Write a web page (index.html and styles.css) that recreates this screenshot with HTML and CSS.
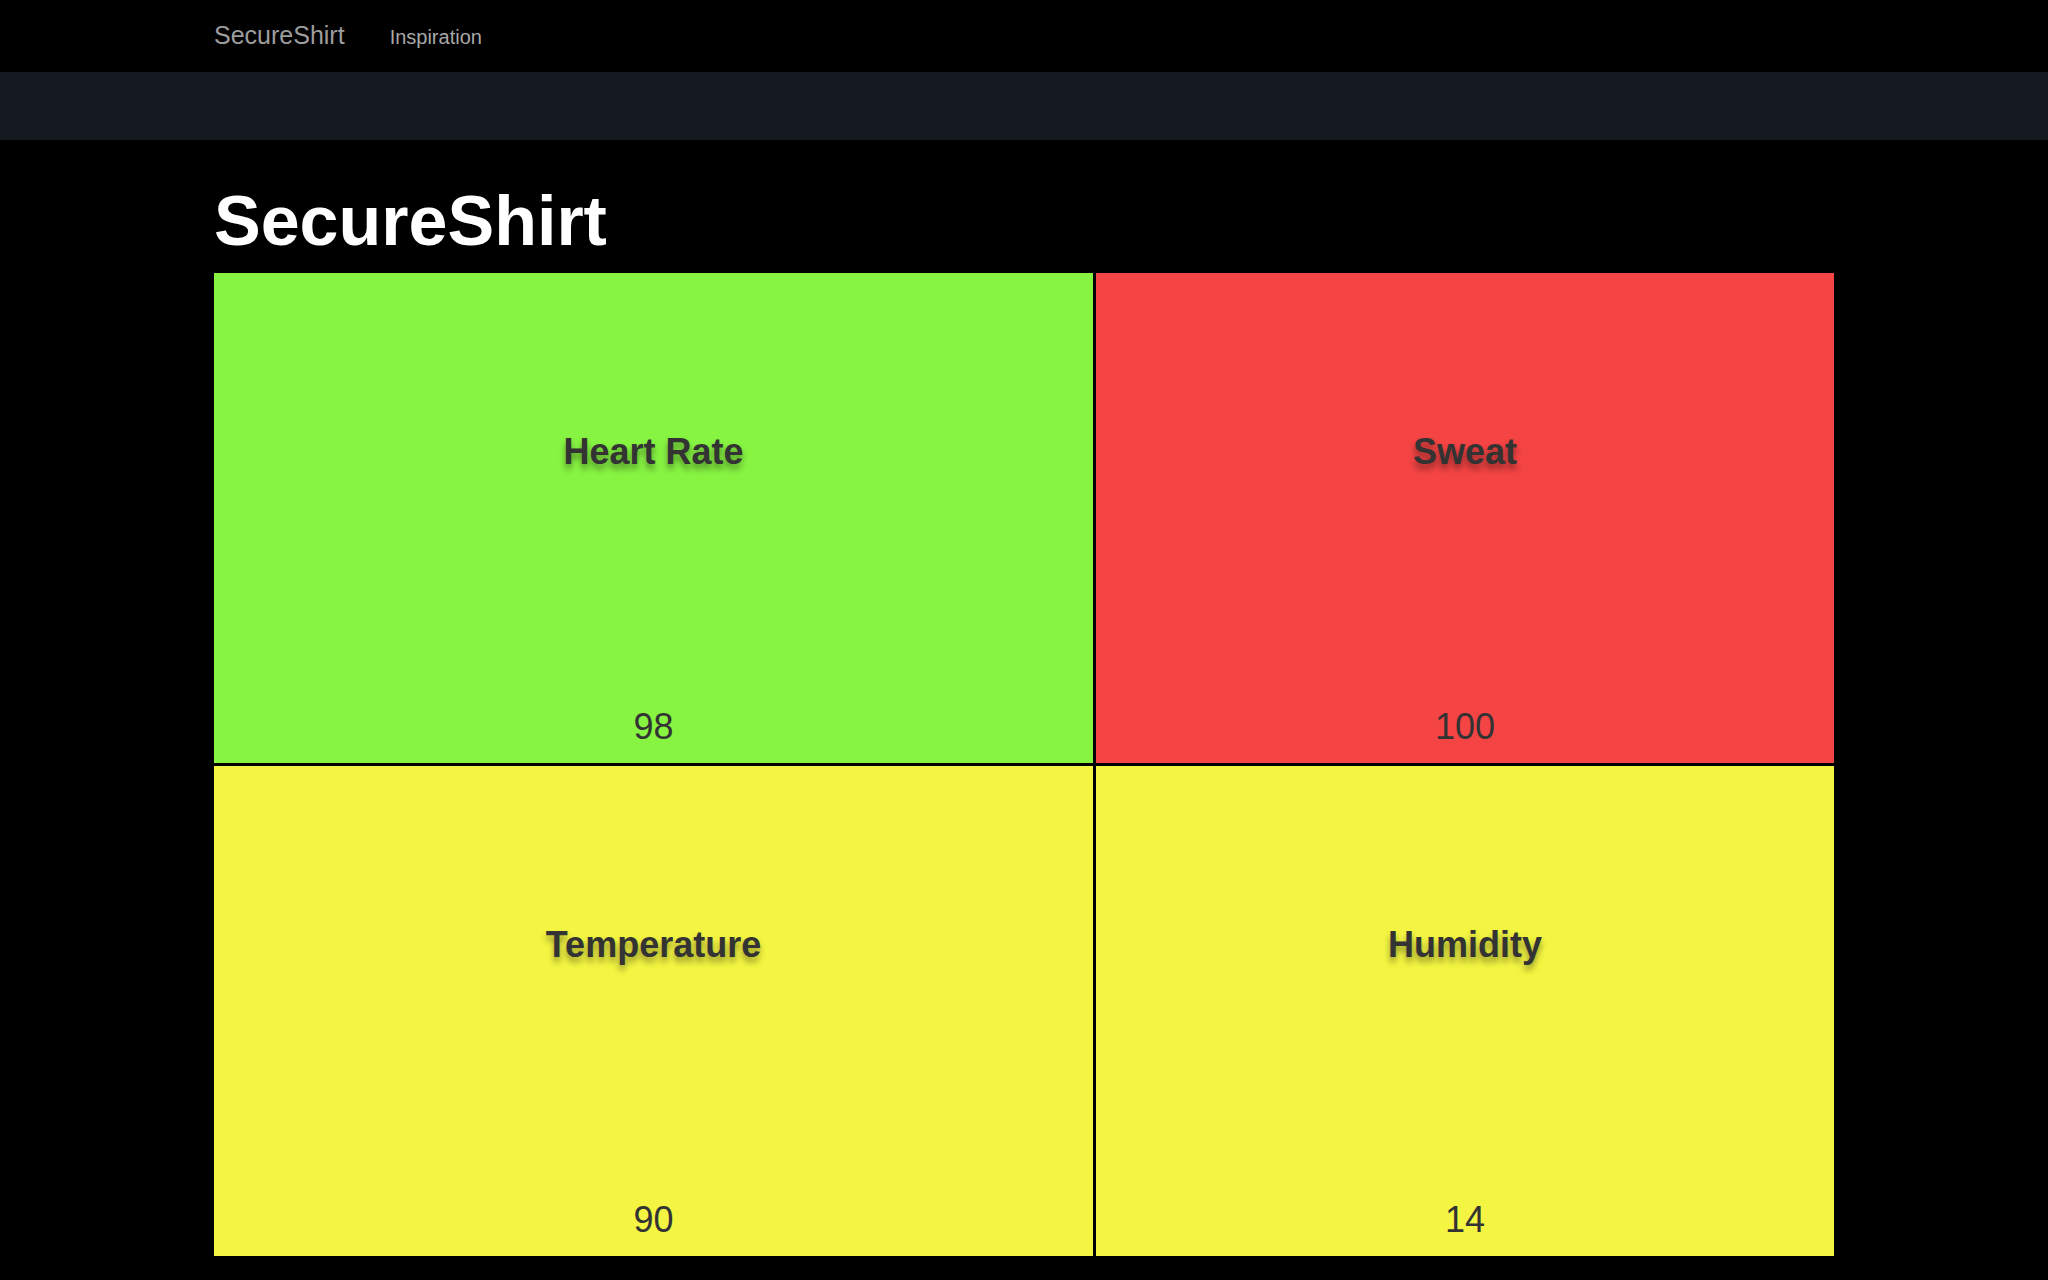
FILE: index.html
```html
<!DOCTYPE html>
<html lang="en">
<head>
<meta charset="utf-8">
<title>SecureShirt</title>
<link rel="stylesheet" href="styles.css">
</head>
<body>
<nav class="navbar">
  <div class="container nav-inner">
    <a class="brand" href="#">SecureShirt</a>
    <a class="nav-link" href="#">Inspiration</a>
  </div>
</nav>
<div class="band"></div>
<main class="container">
  <h1 class="title">SecureShirt</h1>
  <div class="grid">
    <div class="tile tile-green">
      <div class="tile-label">Heart Rate</div>
      <div class="tile-value">98</div>
    </div>
    <div class="tile tile-red">
      <div class="tile-label">Sweat</div>
      <div class="tile-value">100</div>
    </div>
    <div class="tile tile-yellow">
      <div class="tile-label">Temperature</div>
      <div class="tile-value">90</div>
    </div>
    <div class="tile tile-yellow">
      <div class="tile-label">Humidity</div>
      <div class="tile-value">14</div>
    </div>
  </div>
</main>
</body>
</html>
```

FILE: styles.css
```css
html, body {
  margin: 0;
  padding: 0;
  background: #000;
  font-family: "Liberation Sans", Arial, Helvetica, sans-serif;
}

.container {
  width: 1620px;
  margin: 0 auto;
}

.navbar {
  height: 72px;
  background: #000;
  box-sizing: border-box;
  padding-top: 23px;
}

.nav-inner {
  display: flex;
  align-items: baseline;
  gap: 45px;
}

.brand {
  color: #9d9d9d;
  font-size: 25px;
  line-height: 25px;
  text-decoration: none;
}

.nav-link {
  color: #a8a8a8;
  font-size: 20px;
  line-height: 20px;
  text-decoration: none;
}

.band {
  height: 68px;
  background: #151920;
}

.title {
  margin: 42px 0 13px 0;
  color: #fff;
  font-size: 70px;
  line-height: 78px;
  font-weight: bold;
}

.grid {
  display: grid;
  grid-template-columns: 879px 738px;
  grid-template-rows: 490px 490px;
  gap: 3px;
  background: #000;
}

.tile {
  display: flex;
  flex-direction: column;
  align-items: center;
  justify-content: space-between;
  padding: 159px 0 16px 0;
  box-sizing: border-box;
  color: #333;
}

.tile-green { background: #87f442; }
.tile-red { background: #f44444; }
.tile-yellow { background: #f3f542; }

.tile-label {
  font-size: 36px;
  line-height: 40px;
  font-weight: bold;
  text-shadow: 0 5px 6px rgba(0, 0, 0, 0.4);
}

.tile-value {
  font-size: 36px;
  line-height: 40px;
}
```
